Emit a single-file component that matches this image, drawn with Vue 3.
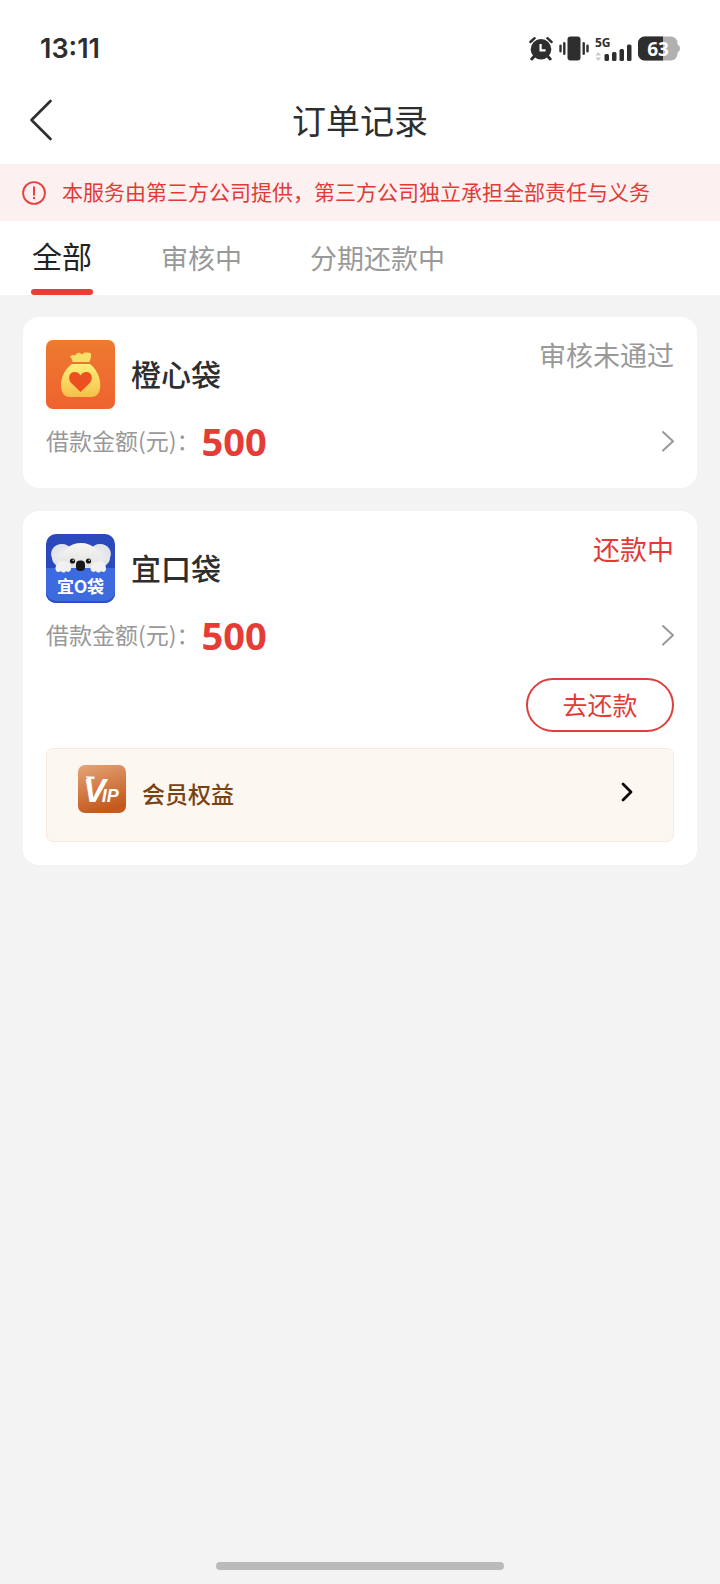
<script setup>
import { ref } from 'vue'

const tabs = ['全部', '审核中', '分期还款中']
const activeTab = ref('全部')

const orders = [
  { name: '橙心袋', logo: 'bag', status: '审核未通过', amount: 500, repaying: false },
  { name: '宜口袋', logo: 'koala', status: '还款中', amount: 500, repaying: true },
]
</script>

<template>
  <div class="page">
    <header class="top">
      <div class="status-bar">
        <time class="clock">13:11</time>
        <div class="indicators">
          <svg width="24" height="25" viewBox="0 0 24 25" aria-label="闹钟">
            <g stroke="#2e2e2e" fill="none" stroke-linecap="round">
              <path d="M1.4 6 5.6 2.2M22.6 6 18.400 2.200" stroke-width="2.400" />
              <path d="M5.500 20 2.800 23M18.500 20l2.700 3" stroke-width="3" />
            </g>
            <circle cx="12" cy="13.200" r="10.300" fill="#2e2e2e" />
            <path d="M11.600 8v6.400h5" fill="none" stroke="#fff" stroke-width="2.200" />
          </svg>
          <svg width="30" height="25" viewBox="0 0 30 25" aria-label="振动">
            <rect x="8.500" y="0.500" width="13" height="24" rx="3" fill="#2e2e2e" />
            <path d="M1.500 9.700v5.600M5.300 7.300v10.400M24.700 7.300v10.400M28.500 9.700v5.600" stroke="#2e2e2e" stroke-width="2.400" stroke-linecap="round" />
          </svg>
          <svg class="signal" width="37" height="25" viewBox="0 0 37 25" aria-label="信号">
            <text x="0" y="11" class="network">5G</text>
            <path d="M0.500 19.500 3.300 16l2.800 3.500zM0.500 21.500 3.300 25l2.800-3.500z" fill="#c9c9c9" />
            <g fill="#2e2e2e">
              <rect x="9.500" y="18" width="4.500" height="7" rx="1.500" />
              <rect x="17" y="16" width="4.500" height="9" rx="1.500" />
              <rect x="24.500" y="13" width="4.500" height="12" rx="1.500" />
              <rect x="32" y="8.500" width="4.500" height="16.500" rx="1.500" />
            </g>
          </svg>
          <svg width="42" height="25" viewBox="0 0 42 25" aria-label="电量 63%">
            <rect x="0" y="0.500" width="39.500" height="24" rx="6.500" fill="#b0b0b0" />
            <path d="M6.500.5H25v24H6.500a6.500 6.500 0 0 1-6.500-6.500V7A6.500 6.500 0 0 1 6.500.5z" fill="#2e2e2e" />
            <path d="M39 8.500c2 .6 3 2 3 4s-1 3.400-3 4z" fill="#b0b0b0" />
            <text x="20" y="19.500" text-anchor="middle" class="level">63</text>
          </svg>
        </div>
      </div>
      <div class="nav">
        <button class="back" type="button" aria-label="返回">
          <svg width="24" height="42" viewBox="0 0 24 42">
            <path d="M21.500 2 2.500 21l19 19" fill="none" stroke="#2e2e2e" stroke-width="2.600" stroke-linecap="round" stroke-linejoin="round" />
          </svg>
        </button>
        <h1 class="title">订单记录</h1>
      </div>
    </header>

    <p class="notice">
      <svg width="24" height="24" viewBox="0 0 24 24" aria-hidden="true">
        <circle cx="12" cy="12" r="10.900" fill="none" stroke="#e8433e" stroke-width="1.900" />
        <path d="M12 6.300v7.400" stroke="#e8433e" stroke-width="2" stroke-linecap="round" />
        <circle cx="12" cy="17" r="1.200" fill="#e8433e" />
      </svg>
      <span>本服务由第三方公司提供，第三方公司独立承担全部责任与义务</span>
    </p>

    <nav class="tabs">
      <button
        v-for="tab in tabs"
        :key="tab"
        type="button"
        class="tab"
        :class="{ active: tab === activeTab }"
        @click="activeTab = tab"
      >{{ tab }}</button>
    </nav>

    <main class="orders">
      <article v-for="order in orders" :key="order.name" class="card">
        <div class="head">
          <svg v-if="order.logo === 'bag'" class="logo" viewBox="0 0 69 69" aria-hidden="true">
            <defs>
              <linearGradient id="bagBack" x1="0" y1="0" x2="0" y2="1">
                <stop offset="0" stop-color="#ee7a30" />
                <stop offset="1" stop-color="#ee632f" />
              </linearGradient>
              <linearGradient id="bagBody" x1="0" y1="0" x2="0" y2="1">
                <stop offset="0" stop-color="#fdf07a" />
                <stop offset="1" stop-color="#f5c04a" />
              </linearGradient>
            </defs>
            <rect width="69" height="69" rx="7" fill="url(#bagBack)" />
            <path d="M26.500 22c.3-2-1.300-3.700-2.500-5.500 1.500-1.800 3.700-2 5.300-1 1.300-3 4.500-3.700 6.300-.9 2.200-2.600 6.500-2.500 9.400-1.100.4 3-.5 5.500-1.500 8.500z" fill="#f8df68" />
            <path d="M26 24h18c6.500 5 10.300 13 10.300 21.500 0 7-3.300 11.500-9 11.500H24.200c-5.900 0-9.200-4.500-9.200-11.500C15 37 19 29 26 24z" fill="url(#bagBody)" />
            <path d="M34.500 52 25.200 43c-3.600-4-2.300-11 3.300-11 3 0 5 1.700 6 3.600 1-1.900 3-3.600 6-3.600 5.600 0 6.900 7 3.300 11z" fill="#ec5020" />
          </svg>
          <svg v-else class="logo" viewBox="0 0 69 69" aria-hidden="true">
            <defs>
              <linearGradient id="fur" x1="0" y1="0" x2="0" y2="1">
                <stop offset="0" stop-color="#f6f6f3" />
                <stop offset="1" stop-color="#dddddb" />
              </linearGradient>
              <radialGradient id="ear">
                <stop offset="0" stop-color="#ffffff" />
                <stop offset="1" stop-color="#e0e3e8" />
              </radialGradient>
            </defs>
            <rect width="69" height="69" rx="10" fill="#2949bd" />
            <path d="M6 24C3 17 8 10 16 10c4 0 7 2 8 4l-7 20C11 33 6 29 6 24zM64 24c3-7-2-14-10-14-4 0-7 2-8 4l7 20c6-1 11-5 11-10z" fill="url(#ear)" />
            <path d="M35 9c12 0 18 8 19 16 .5 6-1 11-4 13H19c-3-2-4.500-7-4-13 1-8 8-16 20-16z" fill="url(#fur)" />
            <path d="M0 34h69v25a10 10 0 0 1-10 10H10A10 10 0 0 1 0 59z" fill="#3e6ae0" />
            <path d="M0 57v2a10 10 0 0 0 10 10h49a10 10 0 0 0 10-10v-2a10 10 0 0 1-10 10H10A10 10 0 0 1 0 57z" fill="#2c51c4" />
            <path d="M9.500 35c0-5 3-8 7.500-8s8 3 8 8c-1 4-4 3-5 2-1 2-4 2-5 0-2 2-5.500 1-5.500-2zM44.500 35c0-5 4-8 8.500-8s7 3 7 8c0 3-3 4-5 2-1 2-4 2-5 0-1 1-4.500 2-5.500-2z" fill="#f1f1f2" />
            <circle cx="26.500" cy="27" r="2.600" fill="#15151a" />
            <circle cx="42.500" cy="27" r="2.600" fill="#15151a" />
            <rect x="30" y="26.500" width="9" height="10.500" rx="4" fill="#17181c" />
            <circle cx="27.200" cy="26.200" r=".7" fill="#fff" />
            <circle cx="43.200" cy="26.200" r=".7" fill="#fff" />
            <text x="34.500" y="58.500" text-anchor="middle" class="logo-text">宜<tspan class="logo-o">O</tspan>袋</text>
          </svg>
          <h2 class="name">{{ order.name }}</h2>
          <span class="status" :class="{ due: order.repaying }">{{ order.status }}</span>
        </div>

        <a class="amount-row" href="#">
          <span class="label">借款金额(元)：</span>
          <strong class="amount">{{ order.amount }}</strong>
          <svg class="more" width="14" height="22" viewBox="0 0 14 22" aria-hidden="true">
            <path d="M3 2l10 9.300L3 20.600" fill="none" stroke="#999" stroke-width="2" stroke-linecap="round" stroke-linejoin="round" />
          </svg>
        </a>

        <template v-if="order.repaying">
          <button class="repay" type="button">去还款</button>
          <a class="vip" href="#">
            <svg width="48" height="48" viewBox="0 0 48 48" aria-hidden="true">
              <defs>
                <linearGradient id="vipBack" x1="0" y1="0" x2="0.300" y2="1">
                  <stop offset="0" stop-color="#e5a578" />
                  <stop offset="1" stop-color="#c45a1e" />
                </linearGradient>
              </defs>
              <rect width="48" height="48" rx="7" fill="url(#vipBack)" />
              <path d="M7.500 11.500h9v2.600h-7z" fill="#fff" />
              <text x="5" y="36.500" class="vip-v">V<tspan dx="-4" class="vip-ip">IP</tspan></text>
            </svg>
            <span class="vip-label">会员权益</span>
            <svg class="vip-more" width="14" height="22" viewBox="0 0 14 22" aria-hidden="true">
              <path d="M3 3l8 8-8 8" fill="none" stroke="#0a0a0a" stroke-width="2.800" stroke-linecap="round" stroke-linejoin="round" />
            </svg>
          </a>
        </template>
      </article>
    </main>

    <div class="home-indicator"></div>
  </div>
</template>

<style>
body {
  background: #f3f3f3;
}
</style>

<style scoped>
.page {
  display: flex;
  flex-direction: column;
  min-height: 100vh;
  box-sizing: border-box;
  padding-bottom: 14px;
  background: #f3f3f3;
  color: #2e2e2e;
  font-family: "Noto Sans CJK SC", sans-serif;
}
button {
  margin: 0;
  padding: 0;
  border: 0;
  background: none;
  color: inherit;
  font-family: inherit;
  cursor: pointer;
}
a {
  color: inherit;
  text-decoration: none;
}
svg {
  display: block;
  flex: none;
}
.top {
  background: #fff;
}
.status-bar {
  display: flex;
  align-items: center;
  justify-content: space-between;
  height: 55px;
  padding: 21px 40px 0;
}
.clock {
  font: 600 27px/32px Inter, sans-serif;
}
.indicators {
  display: flex;
  gap: 6px;
}
.signal {
  overflow: visible;
}
.network {
  font: 700 12px "Noto Sans", sans-serif;
  fill: #2e2e2e;
}
.level {
  font: 700 19px "Noto Sans", sans-serif;
  fill: #fff;
}
.nav {
  display: grid;
  grid-template-columns: 1fr auto 1fr;
  align-items: center;
  height: 88px;
  padding: 0 29px;
}
.back {
  justify-self: start;
}
.title {
  margin: 0;
  font-size: 34px;
  font-weight: 400;
  line-height: 48px;
}
.notice {
  display: flex;
  align-items: center;
  gap: 16px;
  margin: 0;
  padding: 0 22px;
  min-height: 57px;
  background: #fcf0f1;
  color: #e23b36;
  font-size: 21px;
  line-height: 30px;
}
.notice span {
  padding-bottom: 3px;
}
.tabs {
  display: flex;
  gap: 68px;
  height: 74px;
  padding: 0 31px;
  background: #fff;
}
.tab {
  display: flex;
  flex-direction: column;
  justify-content: center;
  align-items: center;
  box-sizing: border-box;
  color: #999;
  font-size: 27px;
  line-height: 40px;
}
.tab.active {
  min-width: 62px;
  padding-top: 14px;
  justify-content: space-between;
  color: #222;
  font-size: 30px;
}
.tab.active::after {
  content: "";
  width: 100%;
  height: 6px;
  border-radius: 3px;
  background: #ea3d36;
}
.orders {
  display: flex;
  flex-direction: column;
  gap: 23px;
  padding: 22px 23px;
}
.card {
  display: flex;
  flex-direction: column;
  padding: 23px;
  border-radius: 16px;
  background: #fff;
}
.head {
  display: flex;
  align-items: center;
  height: 69px;
}
.logo {
  width: 69px;
  height: 69px;
}
.logo-text {
  font: 700 17px "Noto Sans CJK SC", sans-serif;
  fill: #fff;
}
.logo-o {
  font: 700 17px Inter, sans-serif;
}
.name {
  margin: 0 0 0 16px;
  padding-bottom: 3px;
  font-size: 30px;
  font-weight: 500;
  line-height: 44px;
}
.status {
  align-self: flex-start;
  margin-left: auto;
  color: #999;
  font-size: 27px;
  line-height: 30px;
}
.status.due {
  color: #e23b36;
}
.amount-row {
  display: flex;
  align-items: center;
  gap: 2px;
  height: 48px;
  padding-top: 8px;
}
.label {
  padding-bottom: 2px;
  color: #999;
  font-size: 23px;
  line-height: 32px;
}
.amount {
  color: #e63c36;
  font: 700 38px/48px "Noto Sans", sans-serif;
}
.more {
  margin-left: auto;
}
.repay {
  align-self: flex-end;
  box-sizing: border-box;
  width: 148px;
  height: 54px;
  margin-top: 19px;
  padding-bottom: 3px;
  border: 2px solid #dc403c;
  border-radius: 27px;
  color: #e23b36;
  font-size: 25px;
  line-height: 36px;
}
.vip {
  display: flex;
  align-items: center;
  gap: 16px;
  margin-top: 16px;
  padding: 16px 39px 28px 31px;
  border: 1px solid #f9e8de;
  border-radius: 7px;
  background: #fdf7f1;
}
.vip-v {
  font: italic 700 34px "Liberation Sans", sans-serif;
  fill: #fff;
}
.vip-ip {
  font: italic 700 18px "Liberation Sans", sans-serif;
}
.vip-label {
  padding-top: 8px;
  color: #7a4313;
  font-size: 23px;
  font-weight: 500;
  line-height: 32px;
}
.vip-more {
  margin-left: auto;
  padding-top: 6px;
}
.home-indicator {
  align-self: center;
  width: 40%;
  height: 8px;
  margin-top: auto;
  border-radius: 4px;
  background: #bababa;
}
</style>
